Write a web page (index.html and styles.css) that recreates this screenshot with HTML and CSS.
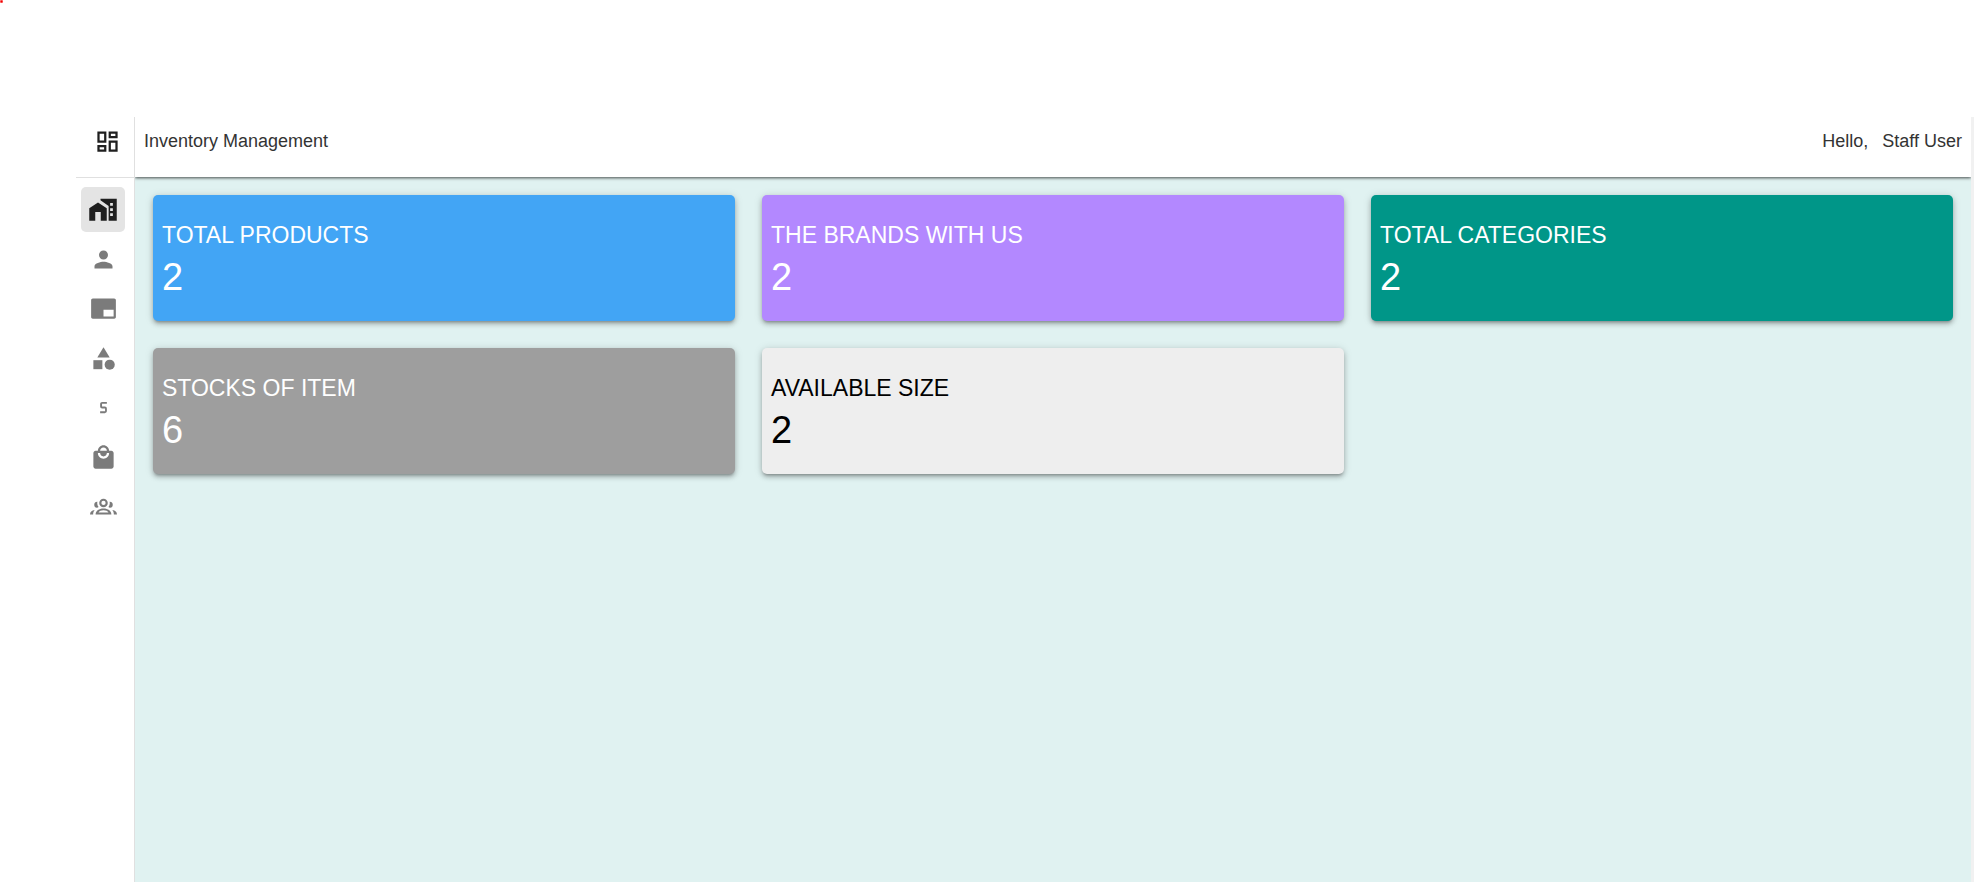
FILE: index.html
```html
<!DOCTYPE html>
<html lang="en">
<head>
<meta charset="utf-8">
<title>Inventory Management</title>
<link rel="stylesheet" href="styles.css">
</head>
<body>
<span class="marker"></span>
<div class="app">
  <aside class="sidebar">
    <div class="brand">
      <svg class="icon" viewBox="0 0 24 24" aria-hidden="true"><path d="M19 5v2h-4V5h4M9 5v6H5V5h4m10 8v6h-4v-6h4M9 17v2H5v-2h4M21 3h-8v6h8V3zM11 3H3v10h8V3zm10 8h-8v10h8V11zm-10 4H3v6h8v-6z"/></svg>
    </div>
    <nav class="nav">
      <a class="nav-item active" href="#" aria-label="Dashboard"><svg class="icon icon-large" viewBox="0 0 24 24"><path d="M8 6L1 10.500V20.500h4.800v-7h4.400v7H15V10.500z"/><path fill-rule="evenodd" d="M10 3v1.200l6.500 4.600V20.500H23V3H10zm7.700 3.400h2.200v2.200h-2.200zm0 4.100h2.200v2.200h-2.200zm0 4.100h2.200v2.200h-2.200z"/></svg></a>
      <a class="nav-item" href="#" aria-label="Profile"><svg class="icon" viewBox="0 0 24 24"><path d="M12 12c2.210 0 4-1.790 4-4s-1.790-4-4-4-4 1.790-4 4 1.790 4 4 4zm0 2c-2.670 0-8 1.340-8 4v2h16v-2c0-2.660-5.330-4-8-4z"/></svg></a>
      <a class="nav-item" href="#" aria-label="Brands"><svg class="icon" viewBox="0 0 24 24"><path d="M21.500 3h-19C1.700 3 1 3.700 1 4.500v15c0 .8.700 1.500 1.500 1.500h19c.8 0 1.500-.7 1.500-1.500v-15c0-.8-.7-1.500-1.500-1.500zM21 19h-9v-6h9v6z"/></svg></a>
      <a class="nav-item" href="#" aria-label="Categories"><svg class="icon" viewBox="0 0 24 24"><path d="M12 2l-5.500 9h11z"/><circle cx="17.500" cy="17.500" r="4.500"/><path d="M3 13.500h8v8H3z"/></svg></a>
      <a class="nav-item" href="#" aria-label="Sizes"><svg class="icon" viewBox="0 0 24 24"><path d="M15 7h-4.200c-1 0-1.800.8-1.800 1.800v2.200c0 1 .8 1.800 1.800 1.800h2.600v2.500H9V17h4.200c1 0 1.800-.8 1.800-1.800v-2.200c0-1-.8-1.800-1.800-1.800h-2.500V8.700H15z"/></svg></a>
      <a class="nav-item" href="#" aria-label="Products"><svg class="icon" viewBox="0 0 24 24"><path d="M19 6h-2c0-2.760-2.240-5-5-5S7 3.240 7 6H5c-1.100 0-1.990.9-1.990 2L3 20c0 1.100.9 2 2 2h14c1.100 0 2-.9 2-2V8c0-1.100-.9-2-2-2zm-7-3c1.660 0 3 1.340 3 3H9c0-1.660 1.340-3 3-3zm0 10c-2.760 0-5-2.240-5-5h2c0 1.660 1.340 3 3 3s3-1.340 3-3h2c0 2.760-2.240 5-5 5z"/></svg></a>
      <a class="nav-item" href="#" aria-label="Staff"><svg class="icon" viewBox="0 0 24 24"><path fill-rule="evenodd" d="M12 5a3.800 3.800 0 1 0 0 7.600A3.800 3.800 0 0 0 12 5zm0 1.900a1.900 1.900 0 1 1 0 3.800 1.900 1.900 0 0 1 0-3.800z"/><path fill-rule="evenodd" d="M5 19c0-3.400 3-5.300 7-5.300s7 1.900 7 5.300zm2.600-1.600h8.800c-.7-1.300-2.200-2-4.400-2s-3.700.7-4.400 2z"/><path d="M6.600 7.800a2.600 2.600 0 1 0-.4 5.200c.6 0 1-.2 1.400-.5a5.500 5.500 0 0 1-1-4.700zM17.400 7.800a2.600 2.600 0 1 1 .4 5.200c-.6 0-1-.2-1.400-.5a5.500 5.500 0 0 0 1-4.700zM4.200 15C1.500 15.300 0 16.700 0 19h2.800c0-1.600.4-2.900 1.400-4zM19.800 15c2.700.3 4.200 1.700 4.200 4h-2.800c0-1.600-.4-2.900-1.400-4z"/></svg></a>
    </nav>
  </aside>
  <div class="content">
    <header class="topbar">
      <span>Inventory Management</span>
      <span class="user"><span>Hello,</span><span>Staff User</span></span>
    </header>
    <main class="cards">
      <section class="card blue"><h2 class="title">TOTAL PRODUCTS</h2><p class="count">2</p></section>
      <section class="card purple"><h2 class="title">THE BRANDS WITH US</h2><p class="count">2</p></section>
      <section class="card teal"><h2 class="title">TOTAL CATEGORIES</h2><p class="count">2</p></section>
      <section class="card gray"><h2 class="title">STOCKS OF ITEM</h2><p class="count">6</p></section>
      <section class="card light"><h2 class="title">AVAILABLE SIZE</h2><p class="count">2</p></section>
    </main>
  </div>
</div>
</body>
</html>
```
FILE: styles.css
```css
* {
  box-sizing: border-box;
}

body {
  margin: 0;
  background: #fff;
  font-family: "Liberation Sans", Arial, sans-serif;
  font-size: 18px;
  color: #333;
}

.marker {
  position: absolute;
  top: 0;
  left: 0;
  width: 3px;
  height: 3px;
  background: radial-gradient(#e00 25%, #f99 75%);
}

.app {
  display: flex;
  min-height: 100vh;
  padding: 117px 0 0 76px;
}

.sidebar {
  flex: none;
  width: 59px;
  border-right: 1px solid #e0e0e0;
}

.brand {
  display: flex;
  align-items: center;
  height: 61px;
  padding: 0 0 11px 18px;
  border-bottom: 1px solid #e0e0e0;
  color: #1f1f1f;
}

.icon {
  display: block;
  flex: none;
  width: 27px;
  height: 27px;
  fill: currentColor;
}

.icon-large {
  width: 30px;
  height: 30px;
}

.nav {
  display: flex;
  flex-direction: column;
  justify-content: space-between;
  height: 342px;
  margin: 9px 9px 0 5px;
}

.nav-item {
  display: flex;
  align-items: center;
  justify-content: center;
  height: 45px;
  border-radius: 5px;
  color: #7b7b7b;
}

.nav-item.active {
  background: #e4e4e4;
  color: #1f1f1f;
}

.content {
  flex: 1;
  background: #e0f2f1;
  border-right: 3px solid #f1f1f1;
}

.topbar {
  display: flex;
  justify-content: space-between;
  height: 60px;
  padding: 13px 9px 0;
  background: #fff;
  line-height: 22px;
  box-shadow: 0 1px 3px rgba(0, 0, 0, 0.7);
  clip-path: inset(0 0 -8px 0);
}

.user {
  display: flex;
  gap: 14px;
}

.cards {
  display: grid;
  grid-template-columns: repeat(3, 1fr);
  gap: 27px;
  padding: 18px;
}

.card {
  height: 126px;
  padding: 26px 9px 0;
  border-radius: 5px;
  color: #fff;
  box-shadow: 0 3px 3px -2px rgba(0, 0, 0, 0.25), 0 3px 5px rgba(0, 0, 0, 0.2), 0 1px 9px rgba(0, 0, 0, 0.15);
}

.title {
  margin: 0;
  font-size: 23px;
  font-weight: 400;
  line-height: 28px;
}

.count {
  margin: 5px 0 0;
  font-size: 38px;
  line-height: 46px;
}

.blue {
  background: #42a5f5;
}

.purple {
  background: #b388ff;
}

.teal {
  background: #009688;
}

.gray {
  background: #9e9e9e;
}

.light {
  background: #eee;
  color: #000;
}
```
